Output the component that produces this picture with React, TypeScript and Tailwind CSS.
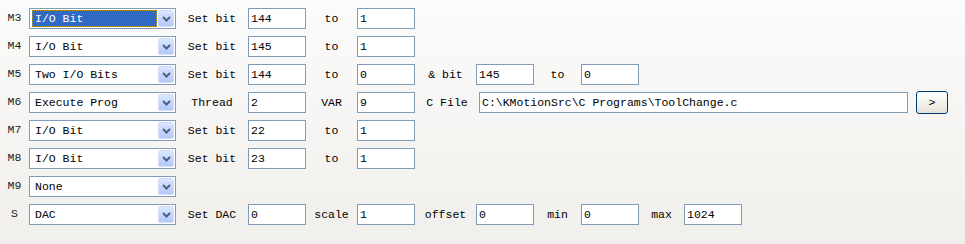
import React from "react";

const font = { fontFamily: '"Liberation Mono", "Courier New", monospace' };

const Chevron = () => (
  <svg width="9" height="6" viewBox="0 0 9 6" className="block">
    <path d="M1 1 L4.5 4.5 L8 1" fill="none" stroke="#4d6185" strokeWidth="2" />
  </svg>
);

const Select = ({ value, active }: { value: string; active?: boolean }) => (
  <div className="flex h-[21px] w-[147px] shrink-0 items-stretch border border-[#7f9db9] bg-white p-[1px]">
    <div className="flex flex-1 items-center px-[1px]">
      {active ? (
        <span className="flex h-[17px] w-full items-center border border-dotted border-[#c9a400] bg-[#316ac5] pl-[2px] text-white">
          {value}
        </span>
      ) : (
        <span className="pl-[3px] text-black">{value}</span>
      )}
    </div>
    <div className="flex w-[16px] items-center justify-center rounded-[2px] border border-[#d2ddfa] bg-gradient-to-b from-[#dde7fe] via-[#c6d5fc] to-[#b4c8f6]">
      <Chevron />
    </div>
  </div>
);

const Field = ({ value, w = "w-[58px]" }: { value: string; w?: string }) => (
  <div className={`flex h-[21px] ${w} shrink-0 items-center border border-[#7f9db9] bg-white pl-[2px] text-black`}>
    {value}
  </div>
);

const Lbl = ({ text, w }: { text: string; w: string }) => (
  <span className={`${w} shrink-0 text-center text-black`}>{text}</span>
);

const Row = ({ m, children }: { m: string; children: React.ReactNode }) => (
  <div className="flex h-[21px] items-center">
    <span className="w-[29px] shrink-0 pb-[2px] text-center text-[#1a1a1a]">{m}</span>
    {children}
  </div>
);

export default function App() {
  return (
    <div
      style={font}
      className="flex h-[244px] w-[965px] flex-col gap-[7px] bg-gradient-to-b from-[#fbfbfb] to-[#f1efeb] pt-[8px] text-[11.5px] leading-none"
    >
      <Row m="M3">
        <Select value="I/O Bit" active />
        <Lbl text="Set bit" w="w-[72px]" />
        <Field value="144" />
        <Lbl text="to" w="w-[51px]" />
        <Field value="1" />
      </Row>
      <Row m="M4">
        <Select value="I/O Bit" />
        <Lbl text="Set bit" w="w-[72px]" />
        <Field value="145" />
        <Lbl text="to" w="w-[51px]" />
        <Field value="1" />
      </Row>
      <Row m="M5">
        <Select value="Two I/O Bits" />
        <Lbl text="Set bit" w="w-[72px]" />
        <Field value="144" />
        <Lbl text="to" w="w-[51px]" />
        <Field value="0" />
        <Lbl text="& bit" w="w-[61px]" />
        <Field value="145" />
        <Lbl text="to" w="w-[47px]" />
        <Field value="0" />
      </Row>
      <Row m="M6">
        <Select value="Execute Prog" />
        <Lbl text="Thread" w="w-[72px]" />
        <Field value="2" />
        <Lbl text="VAR" w="w-[51px]" />
        <Field value="9" />
        <Lbl text="C File" w="w-[64px]" />
        <Field value="C:\KMotionSrc\C Programs\ToolChange.c" w="w-[429px]" />
        <button className="ml-[8px] flex h-[23px] w-[32px] items-center justify-center rounded-[3px] border border-[#003c74] bg-gradient-to-b from-white via-[#f4f3ee] to-[#e3e0d5] text-black">
          &gt;
        </button>
      </Row>
      <Row m="M7">
        <Select value="I/O Bit" />
        <Lbl text="Set bit" w="w-[72px]" />
        <Field value="22" />
        <Lbl text="to" w="w-[51px]" />
        <Field value="1" />
      </Row>
      <Row m="M8">
        <Select value="I/O Bit" />
        <Lbl text="Set bit" w="w-[72px]" />
        <Field value="23" />
        <Lbl text="to" w="w-[51px]" />
        <Field value="1" />
      </Row>
      <Row m="M9">
        <Select value="None" />
      </Row>
      <Row m="S">
        <Select value="DAC" />
        <Lbl text="Set DAC" w="w-[72px]" />
        <Field value="0" />
        <Lbl text="scale" w="w-[51px]" />
        <Field value="1" />
        <Lbl text="offset" w="w-[61px]" />
        <Field value="0" />
        <Lbl text="min" w="w-[47px]" />
        <Field value="0" />
        <Lbl text="max" w="w-[45px]" />
        <Field value="1024" />
      </Row>
    </div>
  );
}
